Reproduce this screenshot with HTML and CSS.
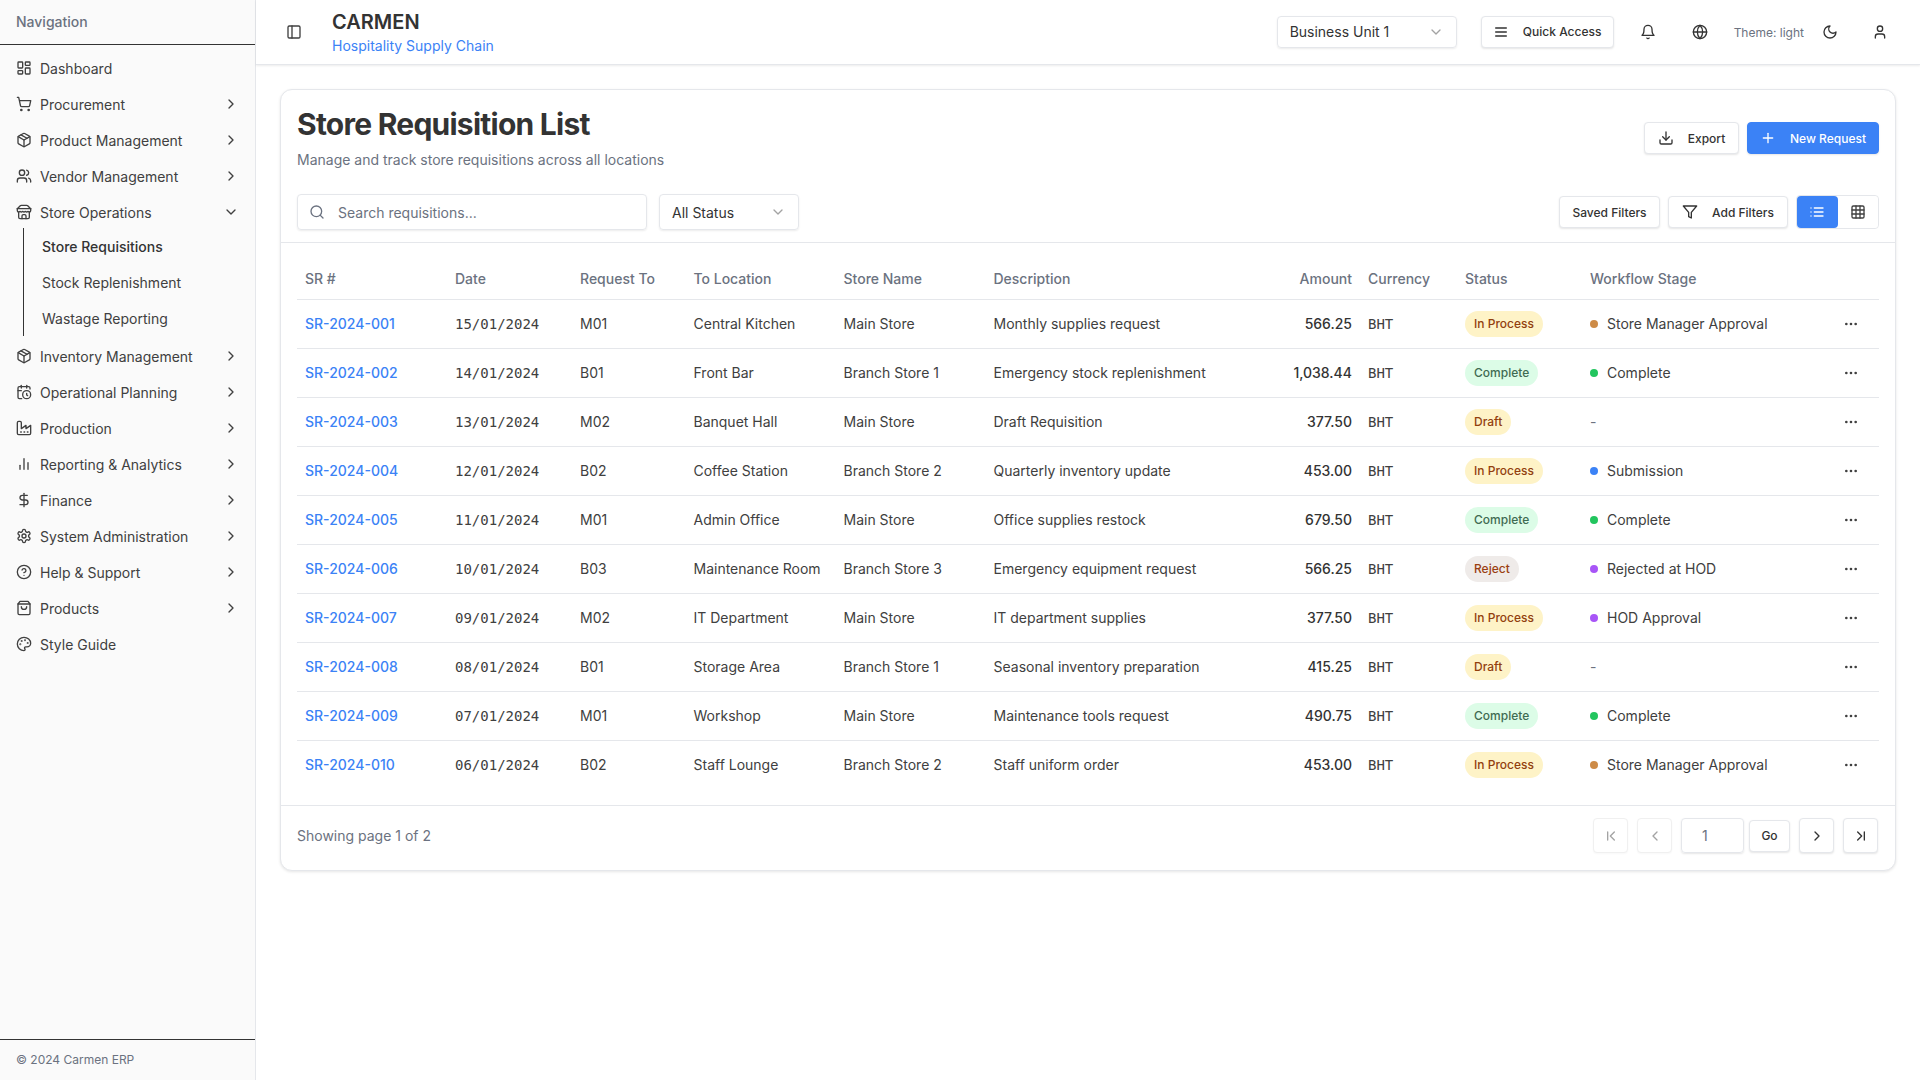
FILE: index.html
```html
<!DOCTYPE html>
<html lang="en">
<head>
    <meta charset="UTF-8">
    <meta name="viewport" content="width=device-width, initial-scale=1.0">
    <title>Store Requisition List</title>
    <link rel="stylesheet" href="styles.css">
</head>
<body>

    <!-- Icon sprite -->
    <svg class="sprite" xmlns="http://www.w3.org/2000/svg">
        <symbol id="i-dashboard" viewBox="0 0 24 24"><rect x="3" y="3" width="7" height="9" rx="1"/><rect x="14" y="3" width="7" height="5" rx="1"/><rect x="14" y="12" width="7" height="9" rx="1"/><rect x="3" y="16" width="7" height="5" rx="1"/></symbol>
        <symbol id="i-cart" viewBox="0 0 24 24"><circle cx="8" cy="21" r="1"/><circle cx="19" cy="21" r="1"/><path d="M2.05 2.05h2l2.66 12.42a2 2 0 0 0 2 1.58h9.78a2 2 0 0 0 1.95-1.57l1.65-7.43H5.12"/></symbol>
        <symbol id="i-package" viewBox="0 0 24 24"><path d="m7.5 4.27 9 5.15"/><path d="M21 8a2 2 0 0 0-1-1.73l-7-4a2 2 0 0 0-2 0l-7 4A2 2 0 0 0 3 8v8a2 2 0 0 0 1 1.73l7 4a2 2 0 0 0 2 0l7-4A2 2 0 0 0 21 16Z"/><path d="m3.3 7 8.7 5 8.7-5"/><path d="M12 22V12"/></symbol>
        <symbol id="i-users" viewBox="0 0 24 24"><path d="M16 21v-2a4 4 0 0 0-4-4H6a4 4 0 0 0-4 4v2"/><circle cx="9" cy="7" r="4"/><path d="M22 21v-2a4 4 0 0 0-3-3.87"/><path d="M16 3.13a4 4 0 0 1 0 7.75"/></symbol>
        <symbol id="i-store" viewBox="0 0 24 24"><path d="m2 7 4.41-4.41A2 2 0 0 1 7.83 2h8.34a2 2 0 0 1 1.42.59L22 7"/><path d="M4 12v8a2 2 0 0 0 2 2h12a2 2 0 0 0 2-2v-8"/><path d="M15 22v-4a2 2 0 0 0-2-2h-2a2 2 0 0 0-2 2v4"/><path d="M2 7h20"/><path d="M22 7v3a2 2 0 0 1-2 2a2.7 2.7 0 0 1-1.59-.63.7.7 0 0 0-.82 0A2.7 2.7 0 0 1 16 12a2.7 2.7 0 0 1-1.59-.63.7.7 0 0 0-.82 0A2.7 2.7 0 0 1 12 12a2.7 2.7 0 0 1-1.59-.63.7.7 0 0 0-.82 0A2.7 2.7 0 0 1 8 12a2.7 2.7 0 0 1-1.59-.63.7.7 0 0 0-.82 0A2.7 2.7 0 0 1 4 12a2 2 0 0 1-2-2V7"/></symbol>
        <symbol id="i-calendar" viewBox="0 0 24 24"><path d="M21 7.5V6a2 2 0 0 0-2-2H5a2 2 0 0 0-2 2v14a2 2 0 0 0 2 2h3.5"/><path d="M16 2v4"/><path d="M8 2v4"/><path d="M3 10h5"/><path d="M17.5 17.5 16 16.3V14"/><circle cx="16" cy="16" r="6"/></symbol>
        <symbol id="i-factory" viewBox="0 0 24 24"><path d="M2 20a2 2 0 0 0 2 2h16a2 2 0 0 0 2-2V8l-7 5V8l-7 5V4a2 2 0 0 0-2-2H4a2 2 0 0 0-2 2Z"/><path d="M17 18h1"/><path d="M12 18h1"/><path d="M7 18h1"/></symbol>
        <symbol id="i-chart" viewBox="0 0 24 24"><path d="M18 20V10"/><path d="M12 20V4"/><path d="M6 20v-6"/></symbol>
        <symbol id="i-dollar" viewBox="0 0 24 24"><path d="M12 2v20"/><path d="M17 5H9.5a3.5 3.5 0 0 0 0 7h5a3.5 3.5 0 0 1 0 7H6"/></symbol>
        <symbol id="i-settings" viewBox="0 0 24 24"><path d="M12.22 2h-.44a2 2 0 0 0-2 2v.18a2 2 0 0 1-1 1.73l-.43.25a2 2 0 0 1-2 0l-.15-.08a2 2 0 0 0-2.73.73l-.22.38a2 2 0 0 0 .73 2.73l.15.1a2 2 0 0 1 1 1.72v.51a2 2 0 0 1-1 1.74l-.15.09a2 2 0 0 0-.73 2.73l.22.38a2 2 0 0 0 2.73.73l.15-.08a2 2 0 0 1 2 0l.43.25a2 2 0 0 1 1 1.73V20a2 2 0 0 0 2 2h.44a2 2 0 0 0 2-2v-.18a2 2 0 0 1 1-1.73l.43-.25a2 2 0 0 1 2 0l.15.08a2 2 0 0 0 2.73-.73l.22-.39a2 2 0 0 0-.73-2.73l-.15-.08a2 2 0 0 1-1-1.74v-.5a2 2 0 0 1 1-1.74l.15-.09a2 2 0 0 0 .73-2.73l-.22-.38a2 2 0 0 0-2.73-.73l-.15.08a2 2 0 0 1-2 0l-.43-.25a2 2 0 0 1-1-1.73V4a2 2 0 0 0-2-2z"/><circle cx="12" cy="12" r="3"/></symbol>
        <symbol id="i-help" viewBox="0 0 24 24"><circle cx="12" cy="12" r="10"/><path d="M9.09 9a3 3 0 0 1 5.83 1c0 2-3 3-3 3"/><path d="M12 17h.01"/></symbol>
        <symbol id="i-bag" viewBox="0 0 24 24"><path d="M6 2 3 6v14a2 2 0 0 0 2 2h14a2 2 0 0 0 2-2V6l-3-4Z"/><path d="M3 6h18"/><path d="M16 10a4 4 0 0 1-8 0"/></symbol>
        <symbol id="i-palette" viewBox="0 0 24 24"><circle cx="13.5" cy="6.5" r=".5"/><circle cx="17.5" cy="10.5" r=".5"/><circle cx="8.5" cy="7.5" r=".5"/><circle cx="6.5" cy="12.5" r=".5"/><path d="M12 2C6.5 2 2 6.5 2 12s4.5 10 10 10c.926 0 1.648-.746 1.648-1.688 0-.437-.18-.835-.437-1.125-.29-.289-.438-.652-.438-1.125a1.64 1.64 0 0 1 1.668-1.668h1.996c3.051 0 5.555-2.503 5.555-5.554C21.965 6.012 17.461 2 12 2z"/></symbol>
        <symbol id="i-right" viewBox="0 0 24 24"><path d="m9 18 6-6-6-6"/></symbol>
        <symbol id="i-left" viewBox="0 0 24 24"><path d="m15 18-6-6 6-6"/></symbol>
        <symbol id="i-down" viewBox="0 0 24 24"><path d="m6 9 6 6 6-6"/></symbol>
        <symbol id="i-first" viewBox="0 0 24 24"><path d="m17 18-6-6 6-6"/><path d="M7 6v12"/></symbol>
        <symbol id="i-last" viewBox="0 0 24 24"><path d="m7 18 6-6-6-6"/><path d="M17 6v12"/></symbol>
        <symbol id="i-panel" viewBox="0 0 24 24"><rect x="3" y="3" width="18" height="18" rx="2"/><path d="M9 3v18"/></symbol>
        <symbol id="i-menu" viewBox="0 0 24 24"><path d="M4 6h16"/><path d="M4 12h16"/><path d="M4 18h16"/></symbol>
        <symbol id="i-bell" viewBox="0 0 24 24"><path d="M6 8a6 6 0 0 1 12 0c0 7 3 9 3 9H3s3-2 3-9"/><path d="M10.3 21a1.94 1.94 0 0 0 3.4 0"/></symbol>
        <symbol id="i-globe" viewBox="0 0 24 24"><circle cx="12" cy="12" r="10"/><path d="M12 2a14.5 14.5 0 0 0 0 20 14.5 14.5 0 0 0 0-20"/><path d="M2 12h20"/></symbol>
        <symbol id="i-moon" viewBox="0 0 24 24"><path d="M12 3a6 6 0 0 0 9 9 9 9 0 1 1-9-9Z"/></symbol>
        <symbol id="i-user" viewBox="0 0 24 24"><path d="M19 21v-2a4 4 0 0 0-4-4H9a4 4 0 0 0-4 4v2"/><circle cx="12" cy="7" r="4"/></symbol>
        <symbol id="i-download" viewBox="0 0 24 24"><path d="M21 15v4a2 2 0 0 1-2 2H5a2 2 0 0 1-2-2v-4"/><path d="m7 10 5 5 5-5"/><path d="M12 15V3"/></symbol>
        <symbol id="i-plus" viewBox="0 0 24 24"><path d="M5 12h14"/><path d="M12 5v14"/></symbol>
        <symbol id="i-search" viewBox="0 0 24 24"><circle cx="11" cy="11" r="8"/><path d="m21 21-4.3-4.3"/></symbol>
        <symbol id="i-filter" viewBox="0 0 24 24"><path d="M22 3H2l8 9.46V19l4 2v-8.54L22 3z"/></symbol>
        <symbol id="i-list" viewBox="0 0 24 24"><path d="M8 6h13"/><path d="M8 12h13"/><path d="M8 18h13"/><path d="M3 6h.01"/><path d="M3 12h.01"/><path d="M3 18h.01"/></symbol>
        <symbol id="i-grid" viewBox="0 0 24 24"><rect x="3" y="3" width="18" height="18" rx="2"/><path d="M3 9h18"/><path d="M3 15h18"/><path d="M9 3v18"/><path d="M15 3v18"/></symbol>
        <symbol id="i-more" viewBox="0 0 24 24"><circle cx="12" cy="12" r="1"/><circle cx="19" cy="12" r="1"/><circle cx="5" cy="12" r="1"/></symbol>
    </svg>

    <div class="app">
        <aside class="sidebar">
            <div class="sidebar-title">Navigation</div>
            <nav class="nav">
                <a class="nav-item"><svg class="icon"><use href="#i-dashboard"/></svg><span>Dashboard</span></a>
                <a class="nav-item"><svg class="icon"><use href="#i-cart"/></svg><span>Procurement</span><svg class="icon chev"><use href="#i-right"/></svg></a>
                <a class="nav-item"><svg class="icon"><use href="#i-package"/></svg><span>Product Management</span><svg class="icon chev"><use href="#i-right"/></svg></a>
                <a class="nav-item"><svg class="icon"><use href="#i-users"/></svg><span>Vendor Management</span><svg class="icon chev"><use href="#i-right"/></svg></a>
                <a class="nav-item"><svg class="icon"><use href="#i-store"/></svg><span>Store Operations</span><svg class="icon chev"><use href="#i-down"/></svg></a>
                <div class="subnav">
                    <a class="sub-item active">Store Requisitions</a>
                    <a class="sub-item">Stock Replenishment</a>
                    <a class="sub-item">Wastage Reporting</a>
                </div>
                <a class="nav-item"><svg class="icon"><use href="#i-package"/></svg><span>Inventory Management</span><svg class="icon chev"><use href="#i-right"/></svg></a>
                <a class="nav-item"><svg class="icon"><use href="#i-calendar"/></svg><span>Operational Planning</span><svg class="icon chev"><use href="#i-right"/></svg></a>
                <a class="nav-item"><svg class="icon"><use href="#i-factory"/></svg><span>Production</span><svg class="icon chev"><use href="#i-right"/></svg></a>
                <a class="nav-item"><svg class="icon"><use href="#i-chart"/></svg><span>Reporting &amp; Analytics</span><svg class="icon chev"><use href="#i-right"/></svg></a>
                <a class="nav-item"><svg class="icon"><use href="#i-dollar"/></svg><span>Finance</span><svg class="icon chev"><use href="#i-right"/></svg></a>
                <a class="nav-item"><svg class="icon"><use href="#i-settings"/></svg><span>System Administration</span><svg class="icon chev"><use href="#i-right"/></svg></a>
                <a class="nav-item"><svg class="icon"><use href="#i-help"/></svg><span>Help &amp; Support</span><svg class="icon chev"><use href="#i-right"/></svg></a>
                <a class="nav-item"><svg class="icon"><use href="#i-bag"/></svg><span>Products</span><svg class="icon chev"><use href="#i-right"/></svg></a>
                <a class="nav-item"><svg class="icon"><use href="#i-palette"/></svg><span>Style Guide</span></a>
            </nav>
            <div class="sidebar-footer">© 2024 Carmen ERP</div>
        </aside>

        <div class="main">
            <header class="topbar">
                <svg class="icon panel-toggle"><use href="#i-panel"/></svg>
                <div class="brand">
                    <div class="brand-name">CARMEN</div>
                    <div class="brand-sub">Hospitality Supply Chain</div>
                </div>
                <div class="topbar-right">
                    <div class="bu-select"><span>Business Unit 1</span><svg class="icon muted"><use href="#i-down"/></svg></div>
                    <button class="btn quick"><svg class="icon"><use href="#i-menu"/></svg>Quick Access</button>
                    <svg class="icon bell"><use href="#i-bell"/></svg>
                    <svg class="icon globe"><use href="#i-globe"/></svg>
                    <span class="theme-label">Theme: light</span>
                    <svg class="icon moon"><use href="#i-moon"/></svg>
                    <svg class="icon person"><use href="#i-user"/></svg>
                </div>
            </header>

            <main class="content">
                <section class="card">
                    <div class="card-head">
                        <div class="title-row">
                            <div>
                                <h1>Store Requisition List</h1>
                                <p class="subtitle">Manage and track store requisitions across all locations</p>
                            </div>
                            <div class="title-actions">
                                <button class="btn export"><svg class="icon"><use href="#i-download"/></svg>Export</button>
                                <button class="btn primary"><svg class="icon"><use href="#i-plus"/></svg>New Request</button>
                            </div>
                        </div>
                        <div class="toolbar">
                            <div class="search">
                                <svg class="icon muted-dark"><use href="#i-search"/></svg>
                                <input type="text" placeholder="Search requisitions...">
                            </div>
                            <div class="status-select"><span>All Status</span><svg class="icon muted"><use href="#i-down"/></svg></div>
                            <div class="toolbar-right">
                                <button class="btn saved">Saved Filters</button>
                                <button class="btn add-filters"><svg class="icon"><use href="#i-filter"/></svg>Add Filters</button>
                                <div class="view-toggle">
                                    <button class="view-btn on"><svg class="icon"><use href="#i-list"/></svg></button>
                                    <button class="view-btn"><svg class="icon"><use href="#i-grid"/></svg></button>
                                </div>
                            </div>
                        </div>
                    </div>

                    <div class="table-wrap">
                        <table>
                            <colgroup>
                                <col class="c-sr"><col class="c-date"><col class="c-to"><col class="c-loc"><col class="c-store"><col class="c-desc"><col class="c-amt"><col class="c-cur"><col class="c-status"><col class="c-flow"><col class="c-act">
                            </colgroup>
                            <thead>
                                <tr><th>SR #</th><th>Date</th><th>Request To</th><th>To Location</th><th>Store Name</th><th>Description</th><th class="num">Amount</th><th>Currency</th><th>Status</th><th>Workflow Stage</th><th></th></tr>
                            </thead>
                            <tbody>
                                <tr><td><a class="sr-link">SR-2024-001</a></td><td class="mono">15/01/2024</td><td>M01</td><td>Central Kitchen</td><td>Main Store</td><td>Monthly supplies request</td><td class="num">566.25</td><td class="mono">BHT</td><td><span class="pill process">In Process</span></td><td><span class="stage"><i class="dot orange"></i>Store Manager Approval</span></td><td class="act"><svg class="icon"><use href="#i-more"/></svg></td></tr>
                                <tr><td><a class="sr-link">SR-2024-002</a></td><td class="mono">14/01/2024</td><td>B01</td><td>Front Bar</td><td>Branch Store 1</td><td>Emergency stock replenishment</td><td class="num">1,038.44</td><td class="mono">BHT</td><td><span class="pill done">Complete</span></td><td><span class="stage"><i class="dot green"></i>Complete</span></td><td class="act"><svg class="icon"><use href="#i-more"/></svg></td></tr>
                                <tr><td><a class="sr-link">SR-2024-003</a></td><td class="mono">13/01/2024</td><td>M02</td><td>Banquet Hall</td><td>Main Store</td><td>Draft Requisition</td><td class="num">377.50</td><td class="mono">BHT</td><td><span class="pill process">Draft</span></td><td class="none">-</td><td class="act"><svg class="icon"><use href="#i-more"/></svg></td></tr>
                                <tr><td><a class="sr-link">SR-2024-004</a></td><td class="mono">12/01/2024</td><td>B02</td><td>Coffee Station</td><td>Branch Store 2</td><td>Quarterly inventory update</td><td class="num">453.00</td><td class="mono">BHT</td><td><span class="pill process">In Process</span></td><td><span class="stage"><i class="dot blue"></i>Submission</span></td><td class="act"><svg class="icon"><use href="#i-more"/></svg></td></tr>
                                <tr><td><a class="sr-link">SR-2024-005</a></td><td class="mono">11/01/2024</td><td>M01</td><td>Admin Office</td><td>Main Store</td><td>Office supplies restock</td><td class="num">679.50</td><td class="mono">BHT</td><td><span class="pill done">Complete</span></td><td><span class="stage"><i class="dot green"></i>Complete</span></td><td class="act"><svg class="icon"><use href="#i-more"/></svg></td></tr>
                                <tr><td><a class="sr-link">SR-2024-006</a></td><td class="mono">10/01/2024</td><td>B03</td><td>Maintenance Room</td><td>Branch Store 3</td><td>Emergency equipment request</td><td class="num">566.25</td><td class="mono">BHT</td><td><span class="pill reject">Reject</span></td><td><span class="stage"><i class="dot purple"></i>Rejected at HOD</span></td><td class="act"><svg class="icon"><use href="#i-more"/></svg></td></tr>
                                <tr><td><a class="sr-link">SR-2024-007</a></td><td class="mono">09/01/2024</td><td>M02</td><td>IT Department</td><td>Main Store</td><td>IT department supplies</td><td class="num">377.50</td><td class="mono">BHT</td><td><span class="pill process">In Process</span></td><td><span class="stage"><i class="dot purple"></i>HOD Approval</span></td><td class="act"><svg class="icon"><use href="#i-more"/></svg></td></tr>
                                <tr><td><a class="sr-link">SR-2024-008</a></td><td class="mono">08/01/2024</td><td>B01</td><td>Storage Area</td><td>Branch Store 1</td><td>Seasonal inventory preparation</td><td class="num">415.25</td><td class="mono">BHT</td><td><span class="pill process">Draft</span></td><td class="none">-</td><td class="act"><svg class="icon"><use href="#i-more"/></svg></td></tr>
                                <tr><td><a class="sr-link">SR-2024-009</a></td><td class="mono">07/01/2024</td><td>M01</td><td>Workshop</td><td>Main Store</td><td>Maintenance tools request</td><td class="num">490.75</td><td class="mono">BHT</td><td><span class="pill done">Complete</span></td><td><span class="stage"><i class="dot green"></i>Complete</span></td><td class="act"><svg class="icon"><use href="#i-more"/></svg></td></tr>
                                <tr><td><a class="sr-link">SR-2024-010</a></td><td class="mono">06/01/2024</td><td>B02</td><td>Staff Lounge</td><td>Branch Store 2</td><td>Staff uniform order</td><td class="num">453.00</td><td class="mono">BHT</td><td><span class="pill process">In Process</span></td><td><span class="stage"><i class="dot orange"></i>Store Manager Approval</span></td><td class="act"><svg class="icon"><use href="#i-more"/></svg></td></tr>
                            </tbody>
                        </table>
                    </div>

                    <div class="card-foot">
                        <span class="page-info">Showing page 1 of 2</span>
                        <div class="pager">
                            <button class="page-btn off"><svg class="icon"><use href="#i-first"/></svg></button>
                            <button class="page-btn off"><svg class="icon"><use href="#i-left"/></svg></button>
                            <div class="page-input">1</div>
                            <button class="go-btn">Go</button>
                            <button class="page-btn"><svg class="icon"><use href="#i-right"/></svg></button>
                            <button class="page-btn"><svg class="icon"><use href="#i-last"/></svg></button>
                        </div>
                    </div>
                </section>
            </main>
        </div>
    </div>

</body>
</html>
```

FILE: styles.css
```css
* {
    box-sizing: border-box;
}

body {
    margin: 0;
    font-family: Inter, "Noto Sans", sans-serif;
    font-size: 14px;
    color: #333;
    background-color: #fff;
}

.sprite {
    display: none;
}

.icon {
    width: 16px;
    height: 16px;
    flex: none;
    fill: none;
    stroke: currentColor;
    stroke-width: 2;
    stroke-linecap: round;
    stroke-linejoin: round;
}

.app {
    display: flex;
    height: 1080px;
    overflow: hidden;
}

/* Sidebar */
.sidebar {
    width: 256px;
    flex: none;
    display: flex;
    flex-direction: column;
    background-color: #fafafa;
    box-shadow: inset -1px 0 0 #e5e7eb;
}

.sidebar-title {
    height: 45px;
    padding: 0 16px;
    margin-right: 1px;
    line-height: 44px;
    font-weight: 500;
    color: #6b7280;
    border-bottom: 1px solid #333;
}

.nav {
    flex: 1;
    padding-top: 5px;
}

.nav-item {
    display: flex;
    align-items: center;
    height: 36px;
    padding: 0 17px 0 16px;
    color: #404040;
}

.nav-item span {
    margin-left: 8px;
    flex: 1;
}

.subnav {
    margin: -2px 0 2px 23px;
    padding-left: 18px;
    border-left: 1px solid #333;
    width: 200px;
}

.sub-item {
    display: flex;
    align-items: center;
    height: 36px;
    color: #404040;
}

.sub-item.active {
    font-weight: 500;
    color: #333;
}

.sidebar-footer {
    height: 41px;
    margin-right: 1px;
    padding: 0 16px;
    line-height: 40px;
    font-size: 12px;
    color: #6b7280;
    border-top: 1px solid #333;
}

/* Top bar */
.main {
    flex: 1;
    min-width: 0;
}

.topbar {
    display: flex;
    align-items: center;
    height: 65px;
    padding: 0 32px 0 30px;
    border-bottom: 1px solid #e5e7eb;
    box-shadow: 0 1px 2px rgba(0, 0, 0, 0.08);
}

.panel-toggle {
    color: #404040;
}

.brand {
    margin-left: 30px;
}

.brand-name {
    font-size: 20px;
    line-height: 26px;
    font-weight: 600;
    color: #333;
}

.brand-sub {
    margin-top: 1px;
    line-height: 20px;
    color: #3b82f6;
}

.topbar-right {
    display: flex;
    align-items: center;
    margin-left: auto;
}

.bu-select {
    display: flex;
    align-items: center;
    justify-content: space-between;
    width: 180px;
    height: 32px;
    margin-top: -1px;
    padding: 0 12px;
    border: 1px solid #e5e7eb;
    border-radius: 4px;
    box-shadow: 0 1px 2px rgba(0, 0, 0, 0.08);
}

.muted {
    color: #a3a3a3;
}

.muted-dark {
    color: #6b7280;
}

.btn {
    display: flex;
    align-items: center;
    justify-content: center;
    height: 32px;
    padding: 0 12px;
    font-family: inherit;
    font-size: 12px;
    font-weight: 500;
    white-space: nowrap;
    color: #333;
    background-color: #fff;
    border: 1px solid #e5e7eb;
    border-radius: 4px;
    box-shadow: 0 1px 2px rgba(0, 0, 0, 0.1);
}

.btn .icon {
    margin-right: 14px;
}

.quick {
    width: 133px;
    margin-top: -1px;
    margin-left: 24px;
    margin-right: 1px;
}

.bell {
    margin-left: 25px;
}

.globe {
    margin-left: 36px;
}

.theme-label {
    margin-left: 26px;
    font-size: 12px;
    color: #6b7280;
}

.moon {
    margin-left: 18px;
}

.person {
    margin-left: 34px;
}

/* Card */
.content {
    padding: 24px;
}

.card {
    background-color: #fff;
    border: 1px solid #e5e7eb;
    border-radius: 12px;
    box-shadow: 0 1px 3px rgba(0, 0, 0, 0.1);
}

.card-head {
    padding: 16px 16px 12px;
    border-bottom: 1px solid #e5e7eb;
}

.title-row {
    display: flex;
    justify-content: space-between;
    align-items: center;
}

h1 {
    margin: 0;
    font-size: 30px;
    line-height: 36px;
    font-weight: 700;
    letter-spacing: -0.75px;
    color: #333;
}

.subtitle {
    margin: 8px 0 0;
    line-height: 20px;
    color: #6b7280;
}

.title-actions {
    display: flex;
    gap: 8px;
}

.export {
    width: 95px;
}

.primary {
    width: 132px;
    color: #fff;
    background-color: #3b82f6;
    border-color: #3b82f6;
}

.toolbar {
    display: flex;
    align-items: center;
    margin-top: 24px;
}

.search {
    display: flex;
    align-items: center;
    width: 350px;
    height: 36px;
    padding: 0 11px;
    border: 1px solid #e5e7eb;
    border-radius: 4px;
    box-shadow: 0 1px 2px rgba(0, 0, 0, 0.08);
}

.search input {
    flex: 1;
    min-width: 0;
    margin-left: 11px;
    padding: 1px 2px;
    border: none;
    outline: none;
    font-family: inherit;
    font-size: 14px;
}

.search input::placeholder {
    color: #6b7280;
}

.status-select {
    display: flex;
    align-items: center;
    justify-content: space-between;
    width: 140px;
    height: 36px;
    margin-left: 12px;
    padding: 0 12px;
    border: 1px solid #e5e7eb;
    border-radius: 4px;
    box-shadow: 0 1px 2px rgba(0, 0, 0, 0.08);
}

.toolbar-right {
    display: flex;
    align-items: center;
    gap: 8px;
    margin-left: auto;
}

.saved {
    width: 101px;
}

.add-filters {
    width: 120px;
}

.view-toggle {
    display: flex;
    width: 83px;
    height: 34px;
    border: 1px solid #e5e7eb;
    border-radius: 4px;
}

.view-btn {
    flex: 1;
    display: flex;
    align-items: center;
    justify-content: center;
    border: none;
    border-radius: 4px;
    padding: 0;
    color: #404040;
    background-color: #fff;
}

.view-btn.on {
    color: #fff;
    background-color: #3b82f6;
}

/* Table */
.table-wrap {
    padding: 16px;
}

table {
    width: 100%;
    table-layout: fixed;
    border-collapse: collapse;
}

.c-sr, .c-loc, .c-store { width: 150px; }
.c-date { width: 125px; }
.c-to { width: 113.5px; }
.c-desc { width: 279.5px; }
.c-amt { width: 95px; }
.c-cur { width: 97px; }
.c-status { width: 125px; }
.c-flow { width: 237px; }
.c-act { width: 60px; }

th {
    height: 40px;
    padding: 0 8px;
    text-align: left;
    font-weight: 500;
    color: #6b7280;
    border-bottom: 1px solid #e5e7eb;
}

td {
    height: 49px;
    padding: 0 8px;
    color: #404040;
    white-space: nowrap;
    border-bottom: 1px solid #e5e7eb;
}

tbody tr:last-child td {
    border-bottom: none;
}

th.num, td.num {
    text-align: right;
}

td.num {
    font-weight: 500;
    color: #333;
}

.sr-link {
    font-weight: 500;
    color: #3b82f6;
}

.mono {
    font-family: "DejaVu Sans Mono", monospace;
    font-size: 14px;
}

.pill {
    display: inline-flex;
    align-items: center;
    height: 26px;
    padding: 0 9px;
    font-size: 12px;
    font-weight: 500;
    border-radius: 13px;
}

.process {
    color: #92400e;
    background-color: #fef3c7;
}

.done {
    color: #3f6b52;
    background-color: #dcfce7;
}

.reject {
    color: #9a3f12;
    background-color: #efebe9;
}

.stage {
    display: flex;
    align-items: center;
    gap: 9px;
}

.dot {
    width: 8px;
    height: 8px;
    border-radius: 50%;
}

.orange { background-color: #cd8b47; }
.green { background-color: #22c55e; }
.blue { background-color: #3b82f6; }
.purple { background-color: #a855f7; }

.none {
    color: #6b7280;
}

.act {
    padding: 0;
    text-align: center;
}

.act .icon {
    display: block;
    margin: 0 auto;
    transform: translateX(2px);
}

/* Footer */
.card-foot {
    display: flex;
    align-items: center;
    justify-content: space-between;
    padding: 12px 17px 17px 16px;
    border-top: 1px solid #e5e7eb;
}

.page-info {
    color: #6b7280;
}

.pager {
    display: flex;
    align-items: center;
    gap: 9px;
}

.page-btn {
    display: flex;
    align-items: center;
    justify-content: center;
    width: 35px;
    height: 35px;
    padding: 0;
    color: #333;
    background-color: #fff;
    border: 1px solid #e5e7eb;
    border-radius: 4px;
    box-shadow: 0 1px 2px rgba(0, 0, 0, 0.1);
}

.page-btn.off {
    color: #a3a3a3;
    border-color: #f0f0f0;
    box-shadow: 0 1px 2px rgba(0, 0, 0, 0.03);
}

.page-input {
    width: 63px;
    height: 35px;
    margin-right: -4px;
    padding-left: 20px;
    line-height: 33px;
    color: #6b7280;
    border: 1px solid #e5e7eb;
    border-radius: 4px;
    box-shadow: 0 1px 2px rgba(0, 0, 0, 0.1);
}

.go-btn {
    width: 41px;
    height: 32px;
    padding: 0;
    font-family: inherit;
    font-size: 12px;
    font-weight: 500;
    color: #333;
    background-color: #fff;
    border: 1px solid #e5e7eb;
    border-radius: 4px;
    box-shadow: 0 1px 2px rgba(0, 0, 0, 0.1);
}
```
